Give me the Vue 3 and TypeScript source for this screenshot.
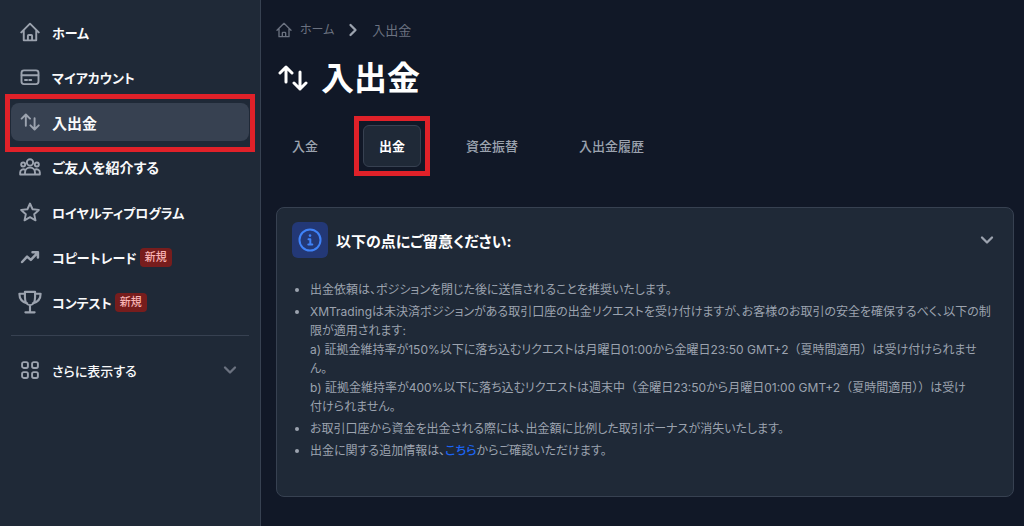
<script setup lang="ts">
import { ref } from 'vue'

type IconName = 'home' | 'card' | 'transfer' | 'people' | 'star' | 'trend' | 'trophy'

interface NavItem {
  label: string
  icon: IconName
  kana?: boolean
  isNew?: boolean
}

const navItems: NavItem[] = [
  { label: 'ホーム', icon: 'home', kana: true },
  { label: 'マイアカウント', icon: 'card', kana: true },
  { label: '入出金', icon: 'transfer' },
  { label: 'ご友人を紹介する', icon: 'people' },
  { label: 'ロイヤルティプログラム', icon: 'star', kana: true },
  { label: 'コピートレード', icon: 'trend', kana: true, isNew: true },
  { label: 'コンテスト', icon: 'trophy', kana: true, isNew: true },
]

const tabs: string[] = ['入金', '出金', '資金振替', '入出金履歴']

const activeNav = ref('入出金')
const activeTab = ref('出金')
const noticeOpen = ref(true)
</script>

<template>
  <div class="layout">
    <aside class="sidebar">
      <nav>
        <ul class="nav-list">
          <li v-for="item in navItems" :key="item.label">
            <a
              href="#"
              class="nav-item"
              :class="{ active: item.label === activeNav }"
              @click.prevent="activeNav = item.label"
            >
              <svg v-if="item.icon === 'home'" class="icon" viewBox="0 0 24 24">
                <path d="M1.500 12.500 12 2l10.500 10.500M4.500 10v12h15V10M9.500 22v-5.500a1 1 0 0 1 1-1h3a1 1 0 0 1 1 1V22" />
              </svg>
              <svg v-else-if="item.icon === 'card'" class="icon" viewBox="0 0 24 24">
                <rect x="1.800" y="4" width="20.400" height="16.500" rx="3" />
                <path d="M2 9.800h20M6 15.500h2.500M11 15.500h2.500" />
              </svg>
              <svg v-else-if="item.icon === 'transfer'" class="icon" viewBox="0 0 24 24">
                <path d="M7 16.500V3.200M2 8l5-5 5 5M17.500 7.500v13.300M12.500 16l5 5 5-5" />
              </svg>
              <svg v-else-if="item.icon === 'people'" class="icon wide" viewBox="0 0 26 24">
                <circle cx="13" cy="6.500" r="3.800" />
                <circle cx="4.800" cy="9" r="2.400" />
                <circle cx="21.200" cy="9" r="2.400" />
                <path d="M7 21v-2.500a6 6 0 0 1 12 0V21ZM7 21H1.200v-2.500a3.700 3.700 0 0 1 6.200-2.800M19 21h5.800v-2.500a3.700 3.700 0 0 0-6.200-2.800" />
              </svg>
              <svg v-else-if="item.icon === 'star'" class="icon" viewBox="0 0 24 24">
                <path d="m12 1.800 3.100 6.900 7.500.8-5.600 5.100 1.600 7.400-6.600-3.800L5.400 22 7 14.600 1.400 9.500l7.500-.8Z" />
              </svg>
              <svg v-else-if="item.icon === 'trend'" class="icon bold" viewBox="0 0 24 24">
                <path d="m2.500 18 6-6.500 4.500 4L21 7M15 6.200h6.500v6.500" />
              </svg>
              <svg v-else class="icon trophy" viewBox="0 0 26 26">
                <path d="M7.500 2h11v5.500c0 5-2 9-5.500 9s-5.500-4-5.500-9ZM7.500 4H1.500c0 5 2.500 9 8.500 10.500M18.500 4h6c0 5-2.500 9-8.500 10.500M13 16.500V24M8 24.200h10" />
              </svg>
              <span class="nav-label" :class="{ kana: item.kana }">{{ item.label }}</span>
              <span v-if="item.isNew" class="badge">新規</span>
              <span v-if="item.label === activeNav" class="marker nav-marker"></span>
            </a>
          </li>
        </ul>
      </nav>
      <hr class="divider" />
      <button type="button" class="more">
        <svg class="icon" viewBox="0 0 24 24">
          <rect x="2.500" y="2.500" width="7" height="7" rx="2" />
          <rect x="14.500" y="2.500" width="7" height="7" rx="2" />
          <rect x="2.500" y="14.500" width="7" height="7" rx="2" />
          <rect x="14.500" y="14.500" width="7" height="7" rx="2" />
        </svg>
        <span class="more-label">さらに表示する</span>
        <svg class="chevron dim" viewBox="0 0 14 14"><path d="m2 4.500 5 5 5-5" /></svg>
      </button>
    </aside>

    <main class="content">
      <nav class="breadcrumb" aria-label="パンくずリスト">
        <a href="#" class="crumb">
          <svg class="crumb-icon" viewBox="0 0 24 24">
            <path d="M1.500 12.500 12 2l10.500 10.500M4.500 10v12h15V10M9.500 22v-5.500a1 1 0 0 1 1-1h3a1 1 0 0 1 1 1V22" />
          </svg>
          <span>ホーム</span>
        </a>
        <svg class="chevron" viewBox="0 0 14 14"><path d="m4.500 2 5 5-5 5" /></svg>
        <span>入出金</span>
      </nav>

      <h1 class="title">
        <svg class="title-icon" viewBox="0 0 32 30">
          <path d="M10 19V4M4 10l6-6 6 6M24 9v17M18 20l6 6 6-6" />
        </svg>
        <span>入出金</span>
      </h1>

      <div class="tabs" role="tablist">
        <button
          v-for="tab in tabs"
          :key="tab"
          type="button"
          role="tab"
          class="tab"
          :class="{ active: tab === activeTab }"
          :aria-selected="tab === activeTab"
          @click="activeTab = tab"
        >
          {{ tab }}
          <span v-if="tab === activeTab" class="marker tab-marker"></span>
        </button>
      </div>

      <section class="card">
        <button type="button" class="card-head" :aria-expanded="noticeOpen" @click="noticeOpen = !noticeOpen">
          <span class="info">
            <svg class="info-icon" viewBox="0 0 24 24">
              <circle cx="12" cy="12" r="10.500" />
              <path d="M10.500 11.200H12.300V16.500M10.300 16.600h4" />
              <circle class="dot" cx="12" cy="7.600" r="1.300" />
            </svg>
          </span>
          <span class="card-title">以下の点にご留意ください:</span>
          <svg class="chevron" viewBox="0 0 14 14"><path d="m2 4.500 5 5 5-5" /></svg>
        </button>
        <ul v-if="noticeOpen" class="notes">
          <li>出金依頼は、ポジションを閉じた後に送信されることを推奨いたします。</li>
          <li>
            XMTradingは未決済ポジションがある取引口座の出金リクエストを受け付けますが、お客様のお取引の安全を確保するべく、以下の制<br />限が適用されます:<br />
            a) 証拠金維持率が150%以下に落ち込むリクエストは月曜日01:00から金曜日23:50 GMT+2<span class="full">（夏時間適用）</span>は受け付けられませ<br />ん。<br />
            b) 証拠金維持率が400%以下に落ち込むリクエストは週末中<span class="full">（</span>金曜日23:50から月曜日01:00 GMT+2<span class="full">（夏時間適用））</span>は受け<br />付けられません。
          </li>
          <li>お取引口座から資金を出金される際には、出金額に比例した取引ボーナスが消失いたします。</li>
          <li>出金に関する追加情報は、<a href="#" class="link">こちら</a>からご確認いただけます。</li>
        </ul>
      </section>
    </main>
  </div>
</template>

<style>
body {
  margin: 0;
  background: #111827;
}
</style>

<style scoped>
.layout {
  display: flex;
  min-height: 100vh;
  background: #111827;
  color: #9ca3af;
  font-family: Inter, "Noto Sans CJK JP", sans-serif;
  font-size: 13px;
  font-feature-settings: "palt";
}

button {
  margin: 0;
  border: 0;
  background: none;
  color: inherit;
  font: inherit;
  font-feature-settings: inherit;
  cursor: pointer;
}

a {
  color: inherit;
  text-decoration: none;
}

svg {
  flex: none;
  fill: none;
  stroke: currentColor;
  stroke-width: 2;
  stroke-linecap: round;
  stroke-linejoin: round;
}

.sidebar {
  box-sizing: border-box;
  flex: none;
  width: 261px;
  padding: 13px 11px;
  border-right: 1px solid #374151;
  background: #1f2937;
}

.nav-list {
  display: flex;
  flex-direction: column;
  gap: 7px;
  margin: 0;
  padding: 0;
  list-style: none;
}

.nav-item {
  position: relative;
  display: flex;
  align-items: center;
  height: 38px;
  padding: 0 8px;
  border-radius: 8px;
  color: #9ca3af;
}

.nav-item.active {
  background: #374151;
}

.icon {
  width: 20px;
  height: 20px;
  margin: 0 2px 0 1px;
  stroke-width: 2.3;
}

.icon.wide {
  width: 22px;
  margin: 0 1px 0 0;
}

.icon.bold {
  stroke-width: 3;
}

.icon.trophy {
  width: 24px;
  height: 24px;
  margin: 0 0 0 -1px;
}

.nav-label,
.more-label {
  margin-left: 10px;
  color: #f9fafb;
  font-size: 14px;
  font-weight: 700;
  white-space: nowrap;
}

.nav-label.kana {
  font-size: 13px;
}

.nav-item.active .nav-label {
  font-size: 15px;
}

.more-label {
  font-size: 13px;
  font-weight: 500;
}

.badge {
  margin-left: 3px;
  padding: 0 5px;
  border-radius: 4px;
  background: #771d1d;
  color: #f8b4b4;
  font-size: 11px;
  font-weight: 500;
  line-height: 19px;
}

.marker {
  position: absolute;
  border: 5px solid #e02129;
  pointer-events: none;
}

.nav-marker {
  inset: -9px -6px -11px;
}

.tab-marker {
  inset: -10px;
}

.divider {
  height: 1px;
  margin: 14px 0 15px;
  border: 0;
  background: #374151;
}

.more {
  display: flex;
  align-items: center;
  width: 100%;
  height: 38px;
  padding: 0 12px 0 8px;
}

.chevron {
  width: 14px;
  height: 14px;
  stroke-width: 2.3;
}

.chevron.dim {
  margin-left: auto;
  color: #6b7280;
}

.content {
  flex: 1;
  min-width: 0;
  padding: 20px 10px 29px 15px;
}

.breadcrumb {
  display: flex;
  align-items: center;
  gap: 12px;
  color: #6b7280;
  line-height: 20px;
}

.breadcrumb .chevron {
  color: #9ca3af;
}

.crumb {
  display: flex;
  align-items: center;
  gap: 8px;
  font-size: 12px;
}

.crumb-icon {
  width: 16px;
  height: 16px;
}

.title {
  display: flex;
  align-items: center;
  gap: 13px;
  margin: 14px 0 23px;
  color: #ffffff;
  font-size: 33px;
  font-weight: 700;
  line-height: 48px;
}

.title-icon {
  width: 32px;
  height: 30px;
  stroke-width: 3;
}

.tabs {
  display: flex;
  gap: 29px;
}

.tab {
  position: relative;
  height: 42px;
  padding: 0 15px;
  border: 1px solid transparent;
  border-radius: 6px;
  font-weight: 500;
  line-height: 18px;
  white-space: nowrap;
}

.tab.active {
  border-color: #374151;
  background: #1f2937;
  color: #ffffff;
  font-weight: 700;
}

.card {
  box-sizing: border-box;
  min-height: 290px;
  margin-top: 40px;
  padding: 14px 15px;
  border: 1px solid #374151;
  border-radius: 8px;
  background: #1f2937;
}

.card-head {
  display: flex;
  align-items: center;
  width: 100%;
  padding: 0 4px 0 0;
}

.card-head .chevron {
  margin-left: auto;
}

.info {
  display: flex;
  align-items: center;
  justify-content: center;
  width: 36px;
  height: 36px;
  border-radius: 6px;
  background: #233876;
}

.info-icon {
  width: 24px;
  height: 24px;
  color: #3f83f8;
}

.info-icon .dot {
  fill: currentColor;
  stroke: none;
}

.card-title {
  margin-left: 8px;
  color: #ffffff;
  font-size: 15px;
  font-weight: 700;
}

.notes {
  display: flex;
  flex-direction: column;
  gap: 3px;
  margin: 22px 0 0;
  padding: 0 0 0 18px;
  font-size: 12px;
  line-height: 19px;
}

.full {
  font-feature-settings: normal;
}

.link {
  color: #1c64f2;
  font-weight: 500;
}
</style>
